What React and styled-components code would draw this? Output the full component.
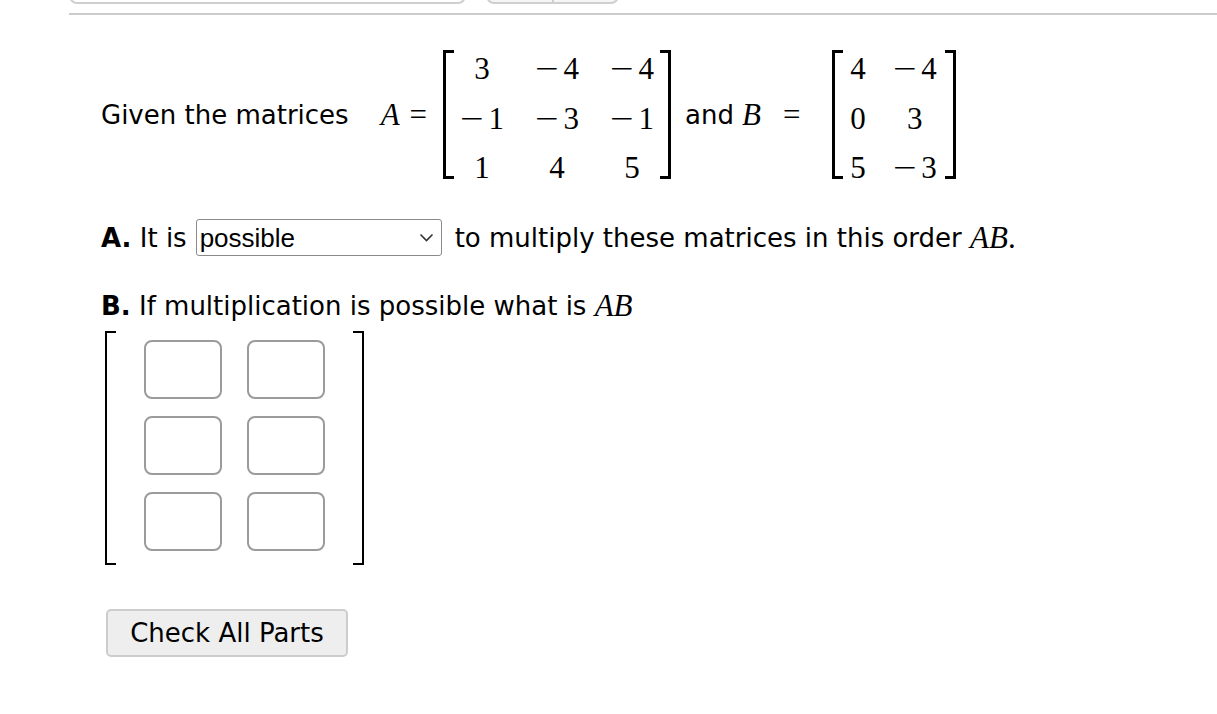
import React from "react";
import styled, { createGlobalStyle } from "styled-components";

const Global = createGlobalStyle`
  html, body { margin: 0; padding: 0; background: #fff; }
  body { font-family: "DejaVu Sans", Verdana, sans-serif; color: #000; }
`;

const Page = styled.div`
  padding-left: 69px;
  width: 1148px;
`;

const TopTabs = styled.div`
  height: 4px;
  overflow: hidden;
  display: flex;
  align-items: flex-end;
  gap: 20px;
`;

const TabBox = styled.div`
  flex: none;
  width: ${(p) => p.$w}px;
  height: 30px;
  box-sizing: border-box;
  border: 2px solid #cfcfcf;
  border-radius: 8px;
  background: ${(p) => (p.$alt ? "#f6f6f6" : "#fff")};
  display: flex;
`;

const TabHalf = styled.div`
  flex: 1;
  & + & { border-left: 2px solid #cfcfcf; }
`;

const Rule = styled.div`
  height: 2px;
  background: #cbcbcb;
  margin-top: 9px;
`;

const Content = styled.div`
  padding: 0 32px;
  font-size: 26px;
`;

const Statement = styled.div`
  display: flex;
  align-items: center;
  margin-top: 35px;
  white-space: pre;
`;

const MathSpan = styled.span`
  font-family: "Liberation Serif", "DejaVu Serif", serif;
  font-size: 31px;
  line-height: 36px;
  font-style: ${(p) => (p.$italic ? "italic" : "normal")};
  margin-left: ${(p) => p.$ml || 0}px;
`;

const Eq = styled.span`
  font-family: "Liberation Serif", "DejaVu Serif", serif;
  font-size: 31px;
  margin: 0 ${(p) => p.$mr}px 0 ${(p) => p.$ml}px;
`;

const MatrixWrap = styled.div`
  display: flex;
  align-items: stretch;
`;

const Bracket = styled.div`
  width: 8px;
  border: 3px solid #000;
  ${(p) => (p.$side === "left" ? "border-right: none;" : "border-left: none;")}
`;

const Cells = styled.div`
  display: grid;
  grid-template-columns: repeat(${(p) => p.$cols}, auto);
  column-gap: ${(p) => p.$gap}px;
  row-gap: 19.5px;
  padding: 4px ${(p) => p.$pr}px 0 ${(p) => p.$pl}px;
  margin-bottom: -4px;
  font-family: "Liberation Serif", "DejaVu Serif", serif;
  font-size: 31px;
`;

const Cell = styled.div`
  height: 30px;
  line-height: 30px;
  text-align: center;
  white-space: pre;
`;

const Minus = styled.span`
  display: inline-block;
  transform: scaleX(1.35);
  margin: 0 8px 0 3px;
`;

const Text = styled.span`
  margin-left: ${(p) => p.$ml || 0}px;
  margin-right: ${(p) => p.$mr || 0}px;
`;

const Line = styled.div`
  display: flex;
  align-items: center;
  white-space: pre;
  margin-top: ${(p) => p.$mt}px;
`;

const Bold = styled.b`
  font-weight: bold;
`;

const SelectWrap = styled.span`
  position: relative;
  display: inline-flex;
  margin: 0 13px 0 9px;
`;

const Select = styled.select`
  appearance: none;
  -webkit-appearance: none;
  width: 246px;
  height: 37px;
  border: 1px solid #8a8a8a;
  border-radius: 3px;
  background: #fff;
  font-family: "Liberation Sans", Arial, sans-serif;
  font-size: 26px;
  padding: 0 0 0 3px;
  color: #000;
`;

const Chevron = styled.svg`
  position: absolute;
  right: 8px;
  top: 14px;
  pointer-events: none;
`;

const AnswerMatrix = styled.div`
  display: flex;
  width: fit-content;
  margin: 7px 0 0 4px;
  height: 234px;
`;

const AnswerBracket = styled.div`
  width: 9px;
  border: 2px solid #000;
  ${(p) => (p.$side === "left" ? "border-right: none;" : "border-left: none;")}
`;

const InputGrid = styled.div`
  display: grid;
  grid-template-columns: repeat(2, 78px);
  grid-auto-rows: 59px;
  column-gap: 25px;
  row-gap: 17px;
  padding: 9px 28px 0 28px;
`;

const Cellbox = styled.input`
  box-sizing: border-box;
  width: 78px;
  height: 59px;
  margin: 0;
  border: 2px solid #9b9b9b;
  border-radius: 8px;
  background: #fff;
  font-size: 20px;
  outline: none;
`;

const Button = styled.button`
  display: block;
  margin-top: 44px;
  margin-left: 5px;
  width: 242px;
  height: 48px;
  box-sizing: border-box;
  border: 2px solid #cdcdcd;
  border-radius: 5px;
  background: #eeeeee;
  font-family: "DejaVu Sans", Verdana, sans-serif;
  font-size: 26px;
  color: #000;
  padding: 0;
`;

const fmt = (n) =>
  n < 0 ? (
    <>
      <Minus>{"\u2212"}</Minus>
      {Math.abs(n)}
    </>
  ) : (
    String(n)
  );

function Matrix({ rows, gap, pl, pr }) {
  const cols = rows[0].length;
  return (
    <MatrixWrap>
      <Bracket $side="left" />
      <Cells $cols={cols} $gap={gap} $pl={pl} $pr={pr}>
        {rows.flat().map((v, i) => (
          <Cell key={i}>{fmt(v)}</Cell>
        ))}
      </Cells>
      <Bracket $side="right" />
    </MatrixWrap>
  );
}

export default function App() {
  const A = [
    [3, -4, -4],
    [-1, -3, -1],
    [1, 4, 5],
  ];
  const B = [
    [4, -4],
    [0, 3],
    [5, -3],
  ];
  return (
    <>
      <Global />
      <Page>
        <TopTabs>
          <TabBox $w={397} />
          <TabBox $w={133} $alt>
            <TabHalf />
            <TabHalf />
          </TabBox>
        </TopTabs>
        <Rule />
        <Content>
          <Statement>
            <Text>Given the matrices</Text>
            <MathSpan $italic $ml={32}>A</MathSpan>
            <Eq $ml={10} $mr={16}>=</Eq>
            <Matrix rows={A} gap={31} pl={6} pr={6} />
            <Text $ml={14}>and</Text>
            <MathSpan $italic $ml={8}>B</MathSpan>
            <Eq $ml={22} $mr={32}>=</Eq>
            <Matrix rows={B} gap={27} pl={7} pr={8} />
          </Statement>
          <Line $mt={40}>
            <Bold>A.</Bold>
            <Text> It is</Text>
            <SelectWrap>
              <Select defaultValue="possible">
                <option value="choose">Choose</option>
                <option value="possible">possible</option>
                <option value="impossible">impossible</option>
              </Select>
              <Chevron width="15" height="9" viewBox="0 0 15 9">
                <path d="M1.5 1.5 L7.5 7.5 L13.5 1.5" fill="none" stroke="#333" strokeWidth="1.6" />
              </Chevron>
            </SelectWrap>
            <Text>to multiply these matrices in this order </Text>
            <MathSpan $italic>AB</MathSpan>
            <MathSpan>.</MathSpan>
          </Line>
          <Line $mt={32}>
            <Bold>B.</Bold>
            <Text> If multiplication is possible what is </Text>
            <MathSpan $italic>AB</MathSpan>
          </Line>
          <AnswerMatrix>
            <AnswerBracket $side="left" />
            <InputGrid>
              {Array.from({ length: 6 }).map((_, i) => (
                <Cellbox key={i} type="text" aria-label={`AB entry ${i + 1}`} />
              ))}
            </InputGrid>
            <AnswerBracket $side="right" />
          </AnswerMatrix>
          <Button>Check All Parts</Button>
        </Content>
      </Page>
    </>
  );
}
